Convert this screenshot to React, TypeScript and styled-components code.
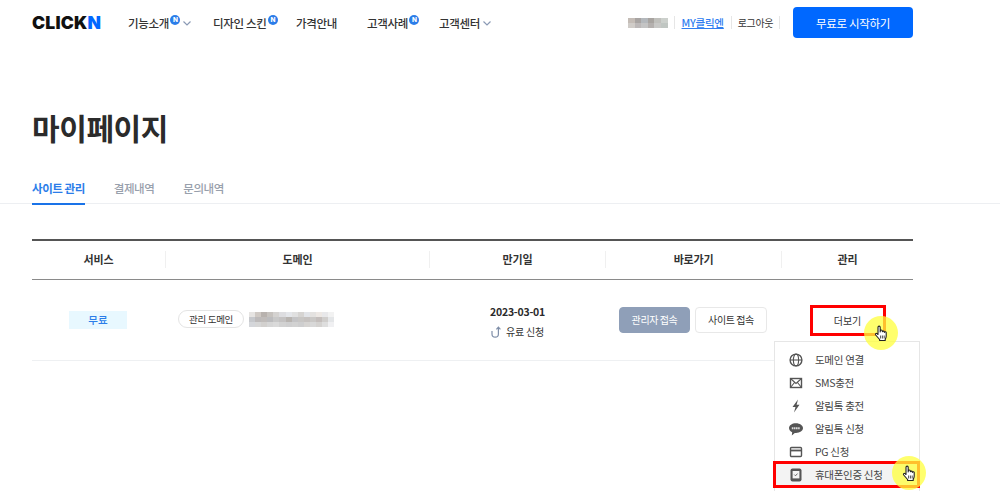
import React from "react"
import styled, { createGlobalStyle } from "styled-components"

const GlobalStyle = createGlobalStyle`
  html, body {
    margin: 0;
    padding: 0;
    height: 491px;
    overflow: hidden;
    background: #fff;
  }
  body {
    font-family: "Noto Sans CJK KR", "Noto Sans", sans-serif;
    color: #333;
  }
  * {
    box-sizing: border-box;
  }
`

const Page = styled.div`
  width: 1000px;
  height: 491px;
  overflow: hidden;
  position: relative;
`

const Header = styled.header`
  display: flex;
  align-items: center;
  height: 45px;
  padding: 0 87px 0 32px;
`

const Logo = styled.div`
  width: 96px;
  font-family: "Inter", "Liberation Sans", sans-serif;
  font-size: 17.5px;
  font-weight: 900;
  letter-spacing: 0.2px;
  color: #111;
  span {
    color: #0068ff;
  }
`

const Nav = styled.nav`
  display: flex;
  align-items: center;
  flex: 1;
`

const NavItem = styled.a<{ $w: number }>`
  display: flex;
  align-items: center;
  width: ${(p) => p.$w}px;
  font-size: 11.5px;
  font-weight: 500;
  letter-spacing: -0.35px;
  color: #333;
`

const NewBadge = styled.span`
  display: inline-flex;
  align-items: center;
  justify-content: center;
  width: 10px;
  height: 10px;
  margin: -5px 0 0 1.5px;
  border-radius: 50%;
  background: #2b7de9;
  color: #fff;
  font-size: 6.5px;
  font-weight: 800;
  letter-spacing: 0;
  font-family: "Inter", sans-serif;
`

const Chevron = styled.svg`
  width: 8px;
  height: 5px;
  margin: 2px 0 0 3px;
  fill: none;
  stroke: #8b9ab5;
  stroke-width: 1.2;
`

const UserArea = styled.div`
  display: flex;
  align-items: center;
  font-size: 10.5px;
  letter-spacing: -0.25px;
`

const MyLink = styled.a`
  color: #2f7df0;
  text-decoration: underline;
  font-weight: 500;
  padding: 0 7px;
  border-left: 1px solid #e6e6e6;
  margin-left: 6px;
  line-height: 13px;
`

const Logout = styled.a`
  color: #333;
  padding: 0 6px;
  font-size: 10px;
  letter-spacing: -0.4px;
  border-left: 1px solid #e6e6e6;
  border-right: 1px solid #e6e6e6;
  line-height: 13px;
`

const StartButton = styled.button`
  width: 120px;
  height: 31px;
  margin: 0 0 0 13px;
  border: 0;
  border-radius: 4px;
  background: #0068ff;
  color: #fff;
  font-family: inherit;
  font-size: 11.5px;
  letter-spacing: -0.3px;
  font-weight: 400;
`

const Mosaic = styled.div<{ $cols: number; $cell: number }>`
  display: grid;
  grid-template-columns: repeat(${(p) => p.$cols}, ${(p) => p.$cell}px);
  grid-auto-rows: 5px;
`

const MosaicCell = styled.i<{ $c: string }>`
  display: block;
  background: ${(p) => p.$c};
`

const Title = styled.h1`
  margin: 60px 0 0 32px;
  font-size: 30px;
  line-height: 44px;
  font-weight: 700;
  letter-spacing: -0.4px;
  color: #2b2b2b;
`

const Tabs = styled.div`
  display: flex;
  gap: 29px;
  height: 40px;
  margin-top: 15px;
  padding-left: 32px;
  border-bottom: 1px solid #edeff2;
`

const Tab = styled.a<{ $active?: boolean }>`
  height: 41px;
  padding-top: 15px;
  font-size: 11.5px;
  line-height: 18px;
  font-weight: ${(p) => (p.$active ? 700 : 500)};
  letter-spacing: -0.45px;
  color: ${(p) => (p.$active ? "#2b7de9" : "#98a0ac")};
  border-bottom: ${(p) => (p.$active ? "2px solid #1a73e8" : "0")};
`

const Table = styled.div`
  width: 881px;
  margin: 35px 0 0 32px;
  border-top: 2px solid #555;
`

const HeadRow = styled.div`
  display: grid;
  grid-template-columns: 133px 264px 176px 176px 132px;
  align-items: center;
  height: 39px;
  padding-bottom: 2px;
  border-bottom: 1px solid #8a8a8a;
`

const HeadCell = styled.div`
  font-size: 11px;
  font-weight: 700;
  line-height: 17px;
  letter-spacing: -0.2px;
  text-align: center;
  color: #333;
  & + & {
    border-left: 1px solid #f0f0f0;
  }
`

const BodyRow = styled.div`
  display: grid;
  grid-template-columns: 133px 264px 176px 176px 132px;
  align-items: center;
  height: 81px;
  border-bottom: 1px solid #eef0f2;
`

const FreeTag = styled.div`
  width: 58px;
  height: 18px;
  margin: 0 0 1px 37px;
  background: #e8f8ff;
  color: #2b7de9;
  font-size: 10.5px;
  font-weight: 500;
  line-height: 18px;
  text-align: center;
`

const DomainCell = styled.div`
  display: flex;
  align-items: center;
  gap: 5px;
  padding: 0 0 2px 13px;
`

const Pill = styled.span`
  width: 66px;
  height: 18px;
  border: 1px solid #e4e4e4;
  border-radius: 9px;
  font-size: 9.5px;
  line-height: 16px;
  text-align: center;
  letter-spacing: -0.3px;
`

const DateCell = styled.div`
  display: flex;
  flex-direction: column;
  align-items: center;
  gap: 4px;
  margin-top: 4px;
  padding-left: 1px;
`

const DateText = styled.div`
  font-size: 10.5px;
  font-weight: 700;
  line-height: 16px;
  letter-spacing: -0.25px;
  color: #2b2b2b;
`

const Upgrade = styled.a`
  display: flex;
  align-items: center;
  gap: 5px;
  font-size: 10px;
  letter-spacing: -0.25px;
  line-height: 16px;
`

const UpgradeIcon = styled.svg`
  width: 10px;
  height: 12px;
  fill: none;
  stroke: #7f8ea8;
  stroke-width: 1.2;
`

const ShortcutCell = styled.div`
  display: flex;
  justify-content: center;
  gap: 5px;
  padding-bottom: 1px;
`

const ActionButton = styled.button<{ $primary?: boolean }>`
  width: ${(p) => (p.$primary ? 71 : 72)}px;
  height: 26px;
  padding: 0;
  border-radius: 4px;
  border: 1px solid ${(p) => (p.$primary ? "#8f9fb8" : "#e8e8e8")};
  background: ${(p) => (p.$primary ? "#8f9fb8" : "#fff")};
  color: ${(p) => (p.$primary ? "#fff" : "#333")};
  font-family: inherit;
  font-size: 10px;
  letter-spacing: -0.4px;
  font-weight: 400;
`

const ManageCell = styled.div`
  position: relative;
  height: 100%;
`

const MoreButton = styled.div`
  position: absolute;
  left: 27px;
  top: 28px;
  width: 79px;
  height: 30px;
  font-size: 10px;
  line-height: 26px;
  text-align: center;
  color: #333;
`

const RedBox = styled.div`
  position: absolute;
  border: 3px solid #f00;
  pointer-events: none;
`

const MoreOutline = styled(RedBox)`
  left: 810px;
  top: 305px;
  width: 76px;
  height: 31px;
`

const PhoneOutline = styled(RedBox)`
  left: 773px;
  top: 461px;
  width: 147px;
  height: 27px;
`

const Spot = styled.div<{ $x: number; $y: number; $size: number }>`
  position: absolute;
  left: ${(p) => p.$x}px;
  top: ${(p) => p.$y}px;
  width: ${(p) => p.$size}px;
  height: ${(p) => p.$size}px;
  border-radius: 50%;
  background: rgba(255, 255, 60, 0.75);
  display: flex;
  align-items: center;
  justify-content: center;
`

const HandIcon = styled.svg`
  width: 14px;
  height: 17px;
  fill: #fff;
  stroke: #222;
  stroke-width: 1.1;
  stroke-linejoin: round;
`

const Menu = styled.div`
  position: absolute;
  left: 774px;
  top: 341px;
  width: 146px;
  height: 160px;
  padding-top: 6px;
  background: #fff;
  border: 1px solid #e6e6e6;
`

const MenuItem = styled.div<{ $active?: boolean }>`
  display: flex;
  align-items: center;
  height: 23px;
  padding-left: 14px;
  gap: 12px;
  font-size: 10.5px;
  letter-spacing: -0.3px;
  color: #444;
  background: ${(p) => (p.$active ? "#f3f3f3" : "transparent")};
`

const MenuIcon = styled.svg`
  flex: none;
  width: 14px;
  height: 14px;
  fill: none;
  stroke: #555;
  stroke-width: 1.4;
`

const Hand = () => (
  <HandIcon viewBox="0 0 14 17">
    <path d="M4 9.5V2.2a1.1 1.1 0 0 1 2.2 0V7l.1-1a1 1 0 0 1 2 .1l.1.6a1 1 0 0 1 1.9.2l.1.6a.9.9 0 0 1 1.8.3v3.4c0 1.3-.5 2.3-1 3.3v1H5.6v-1L1.7 10c-.8-1 .4-2.2 1.3-1.4z" />
    <path d="M6.6 10.5v3M8.4 10.5v3M10.2 10.5v3" strokeWidth="0.8" />
  </HandIcon>
)

const topMosaic = [
  "#c4bcb6", "#a8a4a2", "#b4b8bc", "#a8a4a0", "#c0c0bc", "#ccd0cc",
  "#d0ccc8", "#bcb8b8", "#c4c4c4", "#b4b0ae", "#c8c8c6", "#c0c6c2",
]

const domainMosaic = [
  "#e6e4e2", "#cfc9c4", "#b8b2ae", "#c6c2be", "#d4d2d0", "#dddde0", "#e4e6ea", "#e0e0e0", "#d6d4d2", "#e2e4e8", "#e4e2e0", "#ede8e4", "#e8e8ea", "#f2f2f2",
  "#c6c8cc", "#bdbaba", "#c0bcba", "#bcbcbe", "#c8c8c8", "#c4c2c2", "#b8b4b0", "#c4c4c6", "#c8c6c4", "#c6c2c0", "#cac8c6", "#c4bebc", "#d0cecc", "#e4e6e8",
  "#d4d6da", "#d6d6d6", "#d2d0ce", "#d6d6d6", "#dadada", "#d2d2d2", "#cfcfd0", "#d2d2d2", "#cececf", "#d6d4d2", "#d8d8d8", "#d4d2d0", "#dedede", "#f0f0f2",
]

export default function App() {
  return (
    <Page>
      <GlobalStyle />
      <Header>
        <Logo>
          CLICK<span>N</span>
        </Logo>
        <Nav>
          <NavItem $w={85}>
            기능소개<NewBadge>N</NewBadge>
            <Chevron viewBox="0 0 8 5">
              <path d="M.5.5 4 4 7.5.5" />
            </Chevron>
          </NavItem>
          <NavItem $w={83}>
            디자인 스킨<NewBadge>N</NewBadge>
          </NavItem>
          <NavItem $w={71}>가격안내</NavItem>
          <NavItem $w={72}>
            고객사례<NewBadge>N</NewBadge>
          </NavItem>
          <NavItem $w={70}>
            고객센터
            <Chevron viewBox="0 0 8 5">
              <path d="M.5.5 4 4 7.5.5" />
            </Chevron>
          </NavItem>
        </Nav>
        <UserArea>
          <Mosaic $cols={6} $cell={6.6}>
            {topMosaic.map((c, i) => (
              <MosaicCell key={i} $c={c} />
            ))}
          </Mosaic>
          <MyLink>MY클릭엔</MyLink>
          <Logout>로그아웃</Logout>
        </UserArea>
        <StartButton>무료로 시작하기</StartButton>
      </Header>

      <Title>마이페이지</Title>

      <Tabs>
        <Tab $active>사이트 관리</Tab>
        <Tab>결제내역</Tab>
        <Tab>문의내역</Tab>
      </Tabs>

      <Table>
        <HeadRow>
          <HeadCell>서비스</HeadCell>
          <HeadCell>도메인</HeadCell>
          <HeadCell>만기일</HeadCell>
          <HeadCell>바로가기</HeadCell>
          <HeadCell>관리</HeadCell>
        </HeadRow>
        <BodyRow>
          <FreeTag>무료</FreeTag>
          <DomainCell>
            <Pill>관리 도메인</Pill>
            <Mosaic $cols={14} $cell={6.1}>
              {domainMosaic.map((c, i) => (
                <MosaicCell key={i} $c={c} />
              ))}
            </Mosaic>
          </DomainCell>
          <DateCell>
            <DateText>2023-03-01</DateText>
            <Upgrade>
              <UpgradeIcon viewBox="0 0 10 12">
                <path d="M1 5v3a3.2 3.2 0 0 0 6.4 0V1.5M5.4 3.4 7.4 1.2l2 2.2" />
              </UpgradeIcon>
              유료 신청
            </Upgrade>
          </DateCell>
          <ShortcutCell>
            <ActionButton $primary>관리자 접속</ActionButton>
            <ActionButton>사이트 접속</ActionButton>
          </ShortcutCell>
          <ManageCell>
            <MoreButton>더보기</MoreButton>
          </ManageCell>
        </BodyRow>
      </Table>

      <Menu>
        <MenuItem>
          <MenuIcon viewBox="0 0 14 14">
            <circle cx="7" cy="7" r="5.9" />
            <ellipse cx="7" cy="7" rx="2.6" ry="5.9" strokeWidth="1.1" />
            <path d="M1.1 7h11.8" strokeWidth="1.1" />
          </MenuIcon>
          도메인 연결
        </MenuItem>
        <MenuItem>
          <MenuIcon viewBox="0 0 14 14">
            <rect x="1.5" y="2.5" width="11" height="9" />
            <path d="m1.5 2.5 5.5 5 5.5-5M1.5 11.5 5.5 6.5M12.5 11.5l-4-5" strokeWidth="1.1" />
          </MenuIcon>
          SMS충전
        </MenuItem>
        <MenuItem>
          <MenuIcon viewBox="0 0 14 14">
            <path d="M9 .5 3.5 8h3L5 13.5 10.5 5.8H7.6z" fill="#555" stroke="none" />
          </MenuIcon>
          알림톡 충전
        </MenuItem>
        <MenuItem>
          <MenuIcon viewBox="0 0 14 14">
            <path d="M7 1.2C3.1 1.2 0 3.3 0 6.1c0 1.8 1.3 3.3 3.2 4.2L2.8 13.4l3-2.5c.4 0 .8.1 1.2.1 3.9 0 7-2.2 7-4.9S10.9 1.2 7 1.2z" fill="#555" stroke="none" />
            <path d="M2.8 6.2h8.4" stroke="#ddd" strokeWidth="2" strokeDasharray="1.6 .5" />
          </MenuIcon>
          알림톡 신청
        </MenuItem>
        <MenuItem>
          <MenuIcon viewBox="0 0 14 14">
            <rect x="1.5" y="2.5" width="11" height="9" rx="1" />
            <path d="M1.5 5.5h11" strokeWidth="1.8" />
          </MenuIcon>
          PG 신청
        </MenuItem>
        <MenuItem $active>
          <MenuIcon viewBox="0 0 14 14">
            <rect x="1.5" y="0.5" width="11" height="13" rx="2" fill="#555" stroke="none" />
            <rect x="3.6" y="3" width="6.8" height="7.4" fill="#f3f3f3" stroke="none" />
            <path d="m5.3 6.6 1.2 1.2 2-2.2" strokeWidth="0.9" />
          </MenuIcon>
          휴대폰인증 신청
        </MenuItem>
      </Menu>

      <MoreOutline />
      <PhoneOutline />
      <Spot $x={864} $y={316} $size={34}>
        <Hand />
      </Spot>
      <Spot $x={892} $y={456} $size={34}>
        <Hand />
      </Spot>
    </Page>
  )
}
